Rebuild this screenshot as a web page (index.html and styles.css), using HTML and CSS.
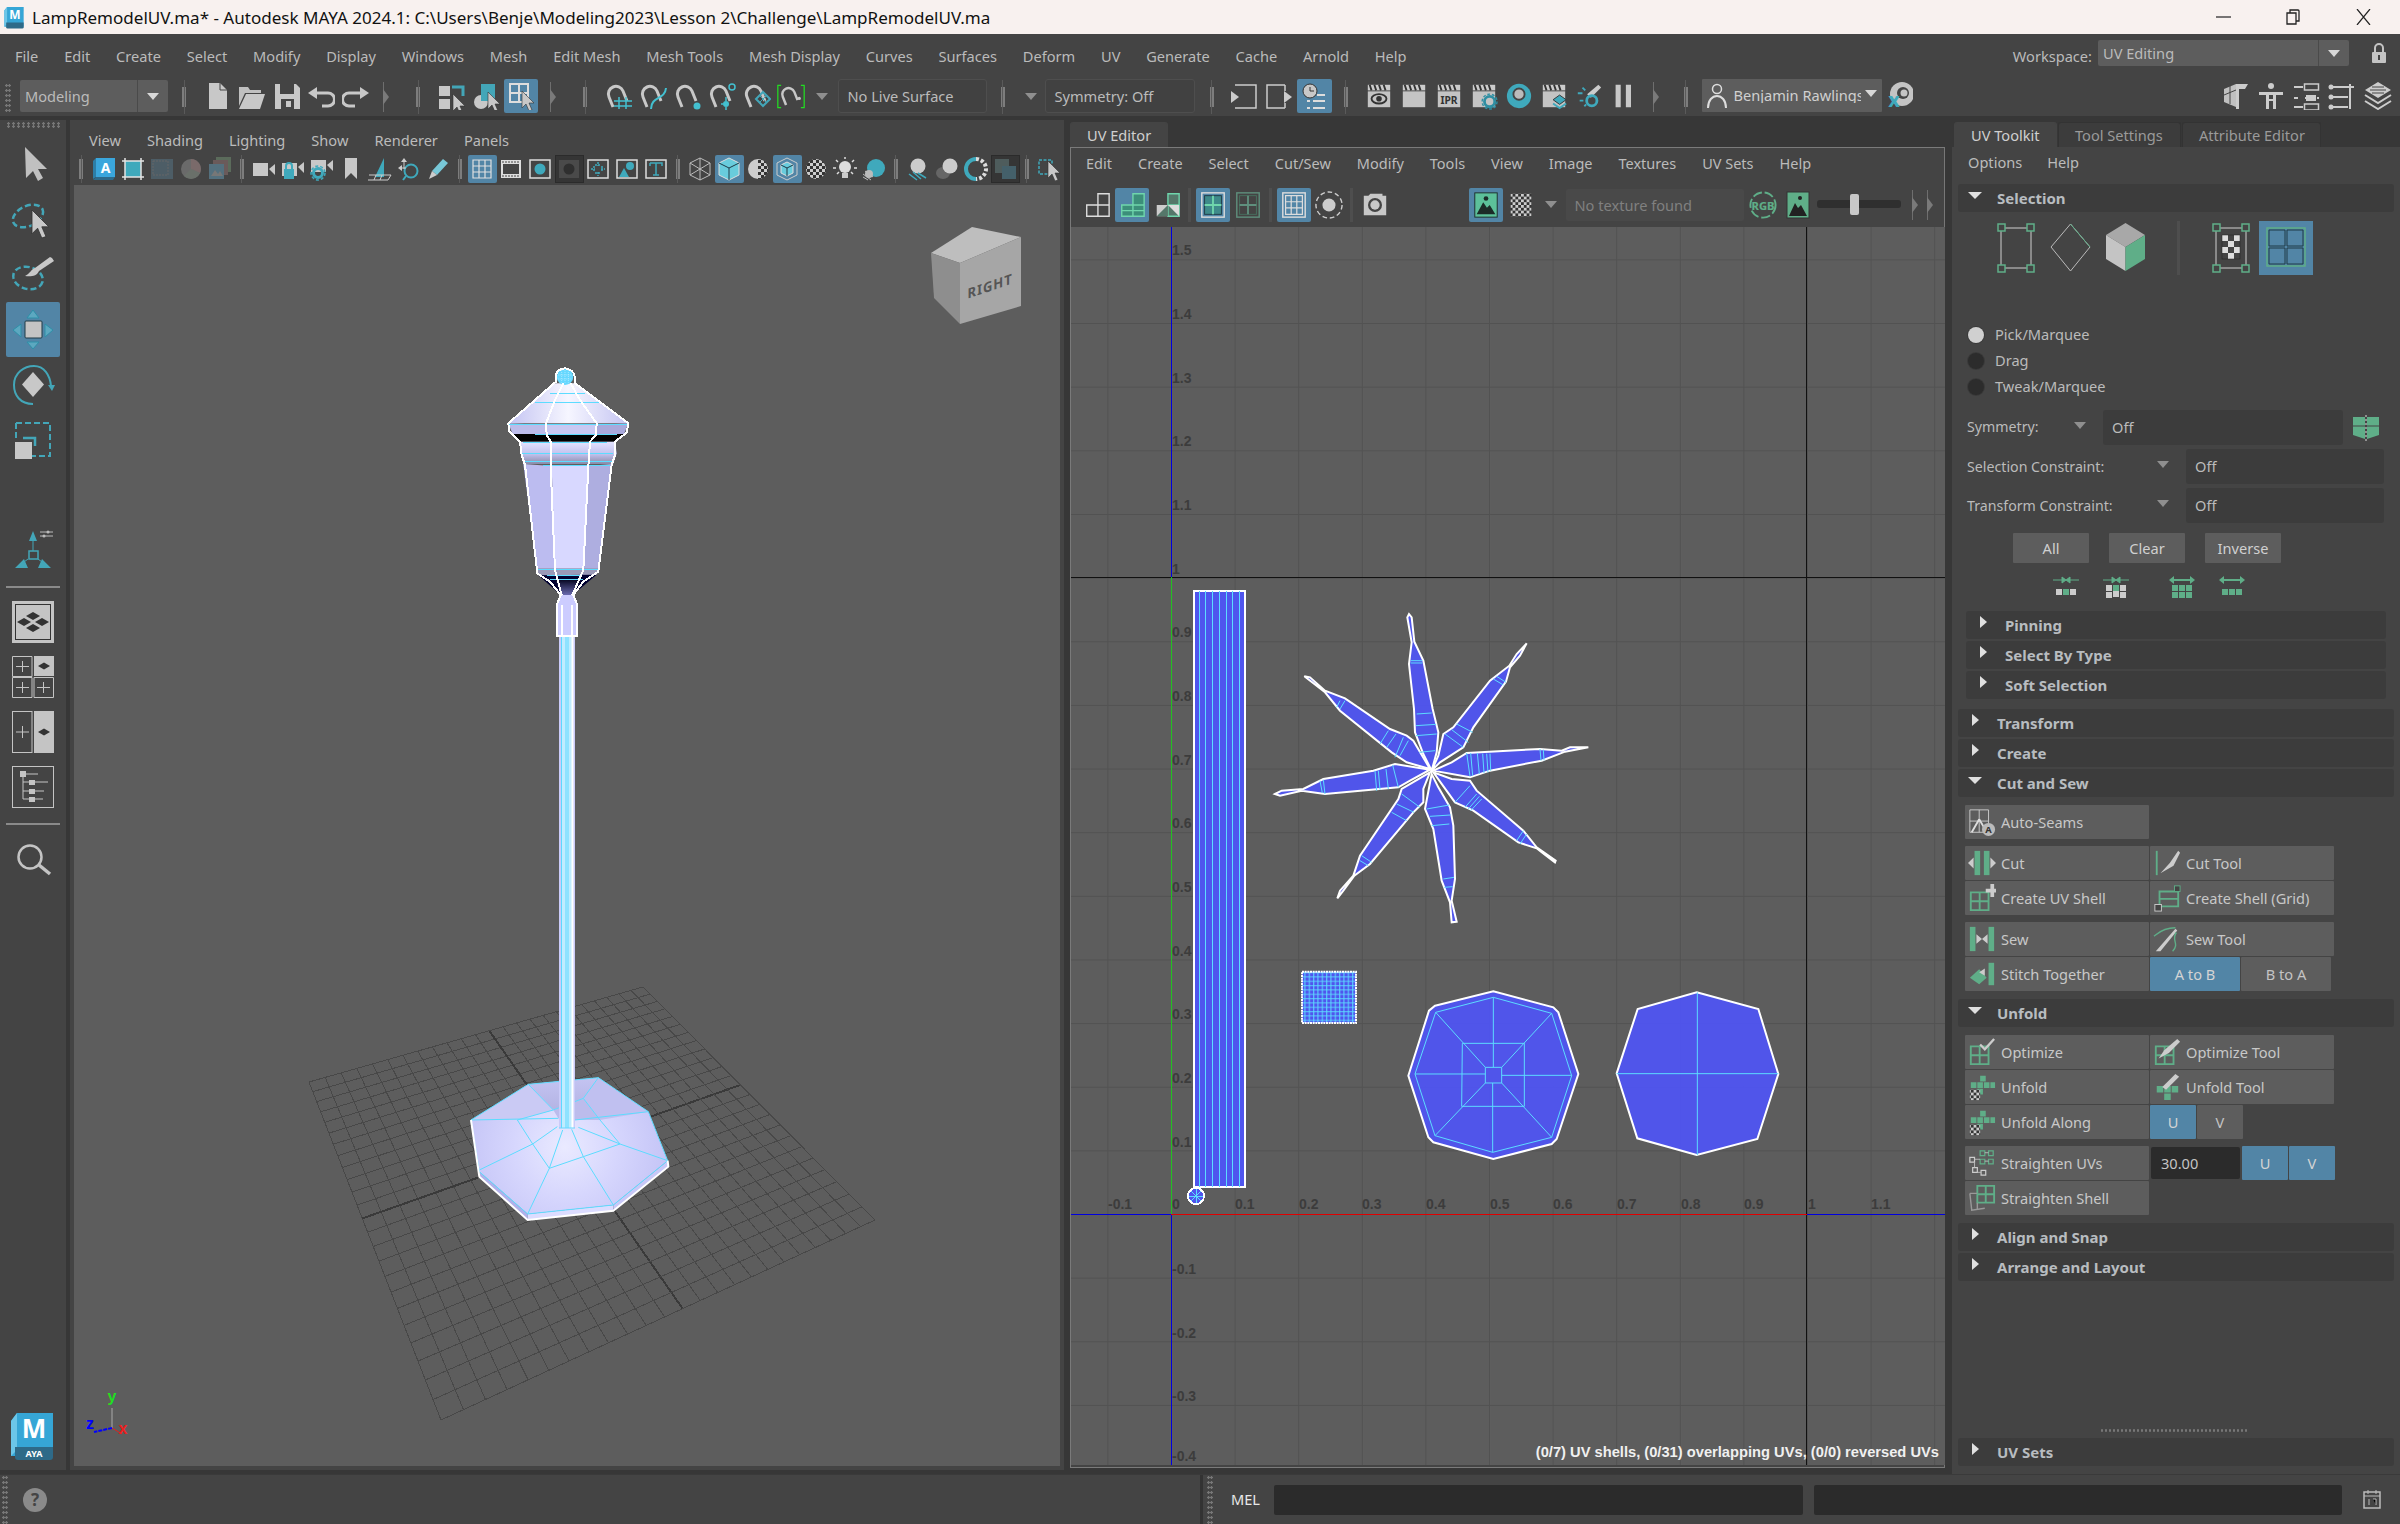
FILE: index.html
```html
<!DOCTYPE html>
<html lang="en">
<head>
<meta charset="utf-8">
<title>LampRemodelUV.ma* - Autodesk MAYA 2024.1</title>
<link rel="stylesheet" href="styles.css">
</head>
<body>
<svg class="defs" aria-hidden="true">
  <defs>
    <pattern id="chk" width="6" height="6" patternUnits="userSpaceOnUse"><rect width="6" height="6" fill="#333"/><rect width="3" height="3" fill="#ccc"/><rect x="3" y="3" width="3" height="3" fill="#ccc"/></pattern>
    <pattern id="uvgrid" x="1171" y="1215" width="63.6" height="63.64" patternUnits="userSpaceOnUse"><path d="M0 0H63.6M0 0V63.64" stroke="#525252" stroke-width="2" fill="none"/></pattern>
    <pattern id="dense" width="13" height="13" patternUnits="userSpaceOnUse"><rect width="13" height="13" fill="#4f55ee"/><path d="M0 2H13M2 0V13" stroke="#5cdcff" stroke-width="3"/></pattern>
    <linearGradient id="lampRoof" x1="0" x2="1"><stop offset="0" stop-color="#c4c4f2"/><stop offset=".5" stop-color="#f6f6ff"/><stop offset="1" stop-color="#c4c4f2"/></linearGradient>
    <linearGradient id="lampCollar" x1="0" x2="0" y1="0" y2="1"><stop offset="0" stop-color="#e4e4ff"/><stop offset=".55" stop-color="#c2c2ee"/><stop offset="1" stop-color="#8a8aa8"/></linearGradient>
    <linearGradient id="lampCone" x1="0" x2="0" y1="0" y2="1"><stop offset="0" stop-color="#000018"/><stop offset="1" stop-color="#6a6ab0"/></linearGradient>
    <radialGradient id="baseFill" gradientUnits="userSpaceOnUse" cx="375" cy="320" r="310"><stop offset="0" stop-color="#eaeaff"/><stop offset=".5" stop-color="#d6d6fd"/><stop offset="1" stop-color="#c4c4f6"/></radialGradient>
    <linearGradient id="baseBack" x1="0" x2="0" y1="0" y2="1"><stop offset="0" stop-color="#c4c4f2"/><stop offset="1" stop-color="#b4b4e4"/></linearGradient>
    <path id="cur" d="M0 0V17L4 13 7 20 10 19 7 12H12Z" fill="#c8c8c8" stroke="#333" stroke-width=".6"/>
    <path id="mag" d="M8 25 4 15A7.500 7.500 0 0 1 18 9L22 19" fill="none" stroke="#c8c8c8" stroke-width="3"/>
    <g id="clap"><rect x="3" y="3" width="24" height="6" fill="#ccc"/><path d="M5 3l2 6M10 3l2 6M15 3l2 6M20 3l2 6" stroke="#333" stroke-width="2"/><rect x="3" y="10" width="24" height="17" fill="#c4c4c4"/></g>
  </defs>
  <symbol id="new" viewBox="0 0 28 28"><path d="M5 1h11l7 7v19H5z" fill="#c8c8c8"/><path d="M16 1v7h7" fill="none" stroke="#444"/></symbol>
  <symbol id="open" viewBox="0 0 28 28"><path d="M1 5h9l2 3h11v3H7L1 24z" fill="#c0c0c0"/><path d="M8 12h19l-5 15H1z" fill="#c8c8c8"/></symbol>
  <symbol id="save" viewBox="0 0 28 28"><path d="M2 2h21l4 4v21H2z" fill="#c8c8c8"/><rect x="7" y="2" width="14" height="10" fill="#444"/><rect x="8" y="17" width="13" height="10" fill="#444"/><rect x="13" y="19" width="5" height="6" fill="#c8c8c8"/></symbol>
  <symbol id="undo" viewBox="0 0 28 28"><path d="M7 11h14a5 5 0 0 1 0 13h-6" fill="none" stroke="#c8c8c8" stroke-width="3"/><path d="M10 5 1 11l9 6z" fill="#c8c8c8"/></symbol>
  <symbol id="redo" viewBox="0 0 28 28"><path d="M21 11H7a5 5 0 0 0 0 13h6" fill="none" stroke="#c8c8c8" stroke-width="3"/><path d="M18 5l9 6-9 6z" fill="#c8c8c8"/></symbol>
  <symbol id="sel1" viewBox="0 0 28 28"><rect x="1" y="4" width="11" height="10" fill="#c8c8c8"/><rect x="1" y="17" width="11" height="10" fill="#c8c8c8"/><path d="M14 5h11v9" fill="none" stroke="#43a6b8" stroke-width="3"/><use href="#cur" x="15" y="12"/></symbol>
  <symbol id="sel2" viewBox="0 0 28 28"><circle cx="8" cy="20" r="7" fill="#c8c8c8"/><rect x="8" y="2" width="14" height="17" fill="#43a6b8"/><use href="#cur" x="15" y="10"/></symbol>
  <symbol id="sel3" viewBox="0 0 28 28"><path d="M3 2h18v18H3zM12 2v18M3 11h18" fill="none" stroke="#ddd" stroke-width="2"/><use href="#cur" x="15" y="9"/></symbol>
  <symbol id="m1" viewBox="0 0 28 28"><use href="#mag"/><path d="M14 15v12M21 15v12M9 19h18M9 24h18" stroke="#43c0d0" stroke-width="1.500"/></symbol>
  <symbol id="m2" viewBox="0 0 28 28"><use href="#mag"/><path d="M27 6C26 18 12 14 12 27" fill="none" stroke="#43c0d0" stroke-width="2"/></symbol>
  <symbol id="m3" viewBox="0 0 28 28"><use href="#mag"/><circle cx="23" cy="24" r="3.500" fill="#43c0d0"/></symbol>
  <symbol id="m4" viewBox="0 0 28 28"><use href="#mag"/><circle cx="24" cy="5" r="3" fill="none" stroke="#43c0d0" stroke-width="1.500"/><circle cx="18" cy="22" r="3" fill="#43c0d0"/><path d="M18 15v4M18 25v3M13 22h2" stroke="#43c0d0" stroke-width="1.500"/></symbol>
  <symbol id="m5" viewBox="0 0 28 28"><use href="#mag"/><path d="M13 17l7-7 7 7-7 7z" fill="none" stroke="#43a6b8" stroke-width="2"/><path d="M16.500 13.500l7 7M23.500 13.500l-7 7" stroke="#43a6b8"/></symbol>
  <symbol id="m6" viewBox="0 0 34 28"><path d="M5 1H1v27h4" fill="none" stroke="#22dd22" stroke-width="1.500"/><path d="M29 1h4v27h-4" fill="none" stroke="#22dd22" stroke-width="1.500"/><g transform="translate(3 0)"><use href="#mag"/><circle cx="24" cy="17" r="2" fill="#c8c8c8"/></g></symbol>
  <symbol id="input" viewBox="0 0 28 28"><path d="M3 4h21v23H3" fill="none" stroke="#ccc" stroke-width="1.500" transform="translate(2 -1)"/><path d="M1 9l8 6-8 6z" fill="#ccc"/></symbol>
  <symbol id="output" viewBox="0 0 28 28"><path d="M20 3H2v23h18" fill="none" stroke="#ccc" stroke-width="1.500"/><path d="M20 3v6M20 21v5" stroke="#ccc" stroke-width="1.500"/><path d="M19 9l8 6-8 6z" fill="#ccc"/></symbol>
  <symbol id="hist" viewBox="0 0 28 28"><circle cx="10" cy="9" r="7" fill="#c8c8c8" stroke="#333"/><path d="M10 5v4h4" stroke="#333" fill="none"/><path d="M7 19h3M13 19h12M7 26h3M13 26h12M17 13h8" stroke="#ddd" stroke-width="2"/></symbol>
  <symbol id="r1" viewBox="0 0 30 30"><use href="#clap"/><ellipse cx="15" cy="18" rx="8" ry="5" fill="none" stroke="#333" stroke-width="2"/><circle cx="15" cy="18" r="3" fill="#333"/></symbol>
  <symbol id="r2" viewBox="0 0 30 30"><use href="#clap"/></symbol>
  <symbol id="r4" viewBox="0 0 30 30"><use href="#clap"/><circle cx="21" cy="21" r="5.500" fill="none" stroke="#2f8fa3" stroke-width="3"/><circle cx="21" cy="21" r="8" fill="none" stroke="#2f8fa3" stroke-width="1.500" stroke-dasharray="3 2"/></symbol>
  <symbol id="r5" viewBox="0 0 30 30"><circle cx="15" cy="15" r="13" fill="#3fa9bc"/><circle cx="15" cy="13" r="6" fill="#bbb" stroke="#444" stroke-width="2"/></symbol>
  <symbol id="r6" viewBox="0 0 30 30"><use href="#clap"/><path d="M21 14l7 5-7 5-7-5z" fill="#3fa9bc" stroke="#333"/><path d="M14 23l7 5 7-5" fill="none" stroke="#3fa9bc" stroke-width="2"/></symbol>
  <symbol id="r7" viewBox="0 0 30 30"><path d="M13 13 25 3l3 3-11 11z" fill="#ccc"/><circle cx="18" cy="20" r="5.500" fill="none" stroke="#3fa9bc" stroke-width="3"/><path d="M3 12h5M5 20h4M8 6l3 3M10 26l2-2" stroke="#3fa9bc" stroke-width="2"/></symbol>
  <symbol id="pause" viewBox="0 0 30 30"><path d="M6 3h5.500v24H6zM17 3h5.500v24H17z" fill="#c8c8c8"/></symbol>
  <symbol id="user" viewBox="0 0 22 30"><circle cx="11" cy="8" r="4.500" fill="none" stroke="#ddd" stroke-width="1.500"/><path d="M2 27c0-16 18-16 18 0" fill="none" stroke="#ddd" stroke-width="2"/></symbol>
  <symbol id="lock" viewBox="0 0 16 22"><path d="M4 10V6a4 4 0 0 1 8 0v4" fill="none" stroke="#c4c4c4" stroke-width="2"/><rect x="1" y="10" width="14" height="11" rx="1" fill="#c4c4c4"/><rect x="7" y="13" width="2" height="5" fill="#444"/></symbol>
  <symbol id="w1" viewBox="0 0 28 28"><path d="M2 7l12-5v23L2 20z" fill="#c0c0c0"/><path d="M14 2h12l-3 5h-6v20h-3z" fill="#ccc"/><path d="M8 4v18M2 13l12-5" stroke="#444"/></symbol>
  <symbol id="w2" viewBox="0 0 28 28"><circle cx="14" cy="4" r="3" fill="#ccc"/><path d="M2 10h24v3h-7v14h-3v-8h-4v8H9V13H2z" fill="#ccc"/><rect x="12" y="13" width="4" height="4" fill="#444"/></symbol>
  <symbol id="w3" viewBox="0 0 28 28"><path d="M1 6h9M1 17h4M1 26h9M12 17h2M24 17h2" stroke="#ccc" stroke-width="2" transform="translate(0 -1)"/><rect x="11.500" y="2" width="14" height="6" fill="none" stroke="#ccc" stroke-width="1.500"/><rect x="13" y="13" width="10" height="6" fill="#ccc"/><rect x="11.500" y="22" width="14" height="6" fill="none" stroke="#ccc" stroke-width="1.500"/></symbol>
  <symbol id="w4" viewBox="0 0 28 28"><circle cx="3" cy="5" r="2.500" fill="#ccc"/><circle cx="3" cy="15" r="2.500" fill="#ccc"/><circle cx="3" cy="25" r="2.500" fill="#ccc"/><path d="M5 5h21M5 15h15M5 25h15M22 2v25" stroke="#ccc" stroke-width="2"/></symbol>
  <symbol id="w5" viewBox="0 0 28 28"><path d="M14 0 27 8 14 16 1 8z" fill="#ccc"/><path d="M1 13l13 8 13-8M1 19l13 8 13-8" fill="none" stroke="#ccc" stroke-width="2"/><path d="M6 8h16M8 5h12M8 11h12" stroke="#444"/></symbol>

  <symbol id="pb" viewBox="0 0 24 24"><rect x="4" y="4" width="16" height="16" fill="#3fa9bc"/><path d="M1 4h22M1 20h22M4 1v22M20 1v22" stroke="#e4e4e4" stroke-width="1.500"/></symbol>
  <symbol id="pc" viewBox="0 0 24 24"><rect x="1" y="2" width="22" height="20" fill="#4d5d66"/><rect x="3" y="4" width="15" height="14" fill="none" stroke="#666" stroke-dasharray="2 1"/></symbol>
  <symbol id="pd" viewBox="0 0 24 24"><circle cx="12" cy="12" r="10" fill="#6a6a6a"/><path d="M12 12 12 2A10 10 0 0 1 21 16z" fill="#7a6a6a"/><path d="M12 12 21 16A10 10 0 0 1 5 19z" fill="#6a706a"/></symbol>
  <symbol id="pe" viewBox="0 0 24 24"><rect x="8" y="0" width="15" height="15" fill="#5b6b5b"/><rect x="5" y="3" width="15" height="15" fill="#6a5a5a"/><rect x="1" y="7" width="15" height="15" fill="#54707e"/><path d="M3 19l4-6 3 4 2-3 3 5z" fill="#777"/></symbol>
  <symbol id="pf" viewBox="0 0 24 24"><rect x="1" y="6" width="15" height="13" fill="#c8c8c8"/><path d="M17 12l6-5v11z" fill="#c8c8c8"/></symbol>
  <symbol id="pg" viewBox="0 0 24 24"><rect x="1" y="6" width="15" height="13" fill="#c8c8c8"/><path d="M17 10l6-5v11z" fill="#c8c8c8"/><rect x="3" y="12" width="10" height="10" fill="#3fa9bc"/><path d="M5 12V9a3 3 0 0 1 6 0v3" fill="none" stroke="#3fa9bc" stroke-width="2"/></symbol>
  <symbol id="ph" viewBox="0 0 24 24"><rect x="1" y="3" width="15" height="12" fill="#c8c8c8"/><path d="M17 8l6-5v11z" fill="#c8c8c8"/><circle cx="8" cy="16" r="4.500" fill="none" stroke="#3fa9bc" stroke-width="3"/><circle cx="8" cy="16" r="7" fill="none" stroke="#3fa9bc" stroke-width="1.500" stroke-dasharray="3 2"/></symbol>
  <symbol id="pi" viewBox="0 0 24 24"><path d="M6 1h12v21l-6-6-6 6z" fill="#c8c8c8"/></symbol>
  <symbol id="pj" viewBox="0 0 24 24"><path d="M16 1v19H7z" fill="#3fa9bc"/><path d="M1 18h22l-3 5H0M8 18l-2 5M14 18l-2 5" fill="none" stroke="#ccc"/></symbol>
  <symbol id="pk" viewBox="0 0 24 24"><circle cx="14" cy="14" r="6.500" fill="none" stroke="#3fa9bc" stroke-width="2"/><path d="M9 19l-3 4" stroke="#3fa9bc" stroke-width="2"/><path d="M7 1l-3 4h6zM1 11l4-3v6z" fill="#ccc"/><path d="M7 5v7M3 11h6" stroke="#ccc"/></symbol>
  <symbol id="pl" viewBox="0 0 24 24"><path d="M6 14 17 2l5 4-11 12z" fill="#78c8d8"/><path d="M6 14l5 4-8 4z" fill="#ccc"/></symbol>
  <symbol id="pm" viewBox="0 0 24 24"><path d="M3 3h18v18H3zM9 3v18M15 3v18M3 9h18M3 15h18" fill="none" stroke="#e0e0e0" stroke-width="1.200"/></symbol>
  <symbol id="pn" viewBox="0 0 24 24"><rect x="2" y="3" width="20" height="18" fill="#ddd"/><rect x="4" y="7" width="16" height="10" fill="#444"/><path d="M3 5h18M3 19h18" stroke="#444" stroke-dasharray="2 1"/></symbol>
  <symbol id="po" viewBox="0 0 24 24"><rect x="2" y="3" width="20" height="18" fill="none" stroke="#ddd" stroke-width="1.500"/><circle cx="12" cy="12" r="5.500" fill="#3fa9bc"/></symbol>
  <symbol id="pp" viewBox="0 0 24 24"><rect x="2" y="3" width="20" height="18" fill="#4a4a4a"/><circle cx="12" cy="12" r="5.500" fill="#2f2f2f"/></symbol>
  <symbol id="pq" viewBox="0 0 24 24"><rect x="2" y="3" width="20" height="18" fill="none" stroke="#ddd" stroke-width="1.500"/><path d="M12 5v4M12 15v4M5 12h4M15 12h4M9 8h6M9 16h6M8 9v6M16 9v6" stroke="#3fa9bc" stroke-width="1.500" stroke-dasharray="2 1"/></symbol>
  <symbol id="pr" viewBox="0 0 24 24"><rect x="2" y="3" width="20" height="18" fill="none" stroke="#ddd" stroke-width="1.500"/><path d="M4 20l5-9 5 9z" fill="#3fa9bc"/><circle cx="15" cy="9" r="4" fill="#3fa9bc"/></symbol>
  <symbol id="ps" viewBox="0 0 24 24"><rect x="2" y="3" width="20" height="18" fill="none" stroke="#ddd" stroke-width="1.500"/><path d="M6 6h12v3M6 6v3M12 6v12M9 18h6" fill="none" stroke="#3fa9bc" stroke-width="1.500"/></symbol>
  <symbol id="pt" viewBox="0 0 24 24"><path d="M12 1 22 6v12l-10 5L2 18V6zM2 6l20 12M22 6 2 18M12 1v22" fill="none" stroke="#bbb"/></symbol>
  <symbol id="pu" viewBox="0 0 24 24"><path d="M12 1 22 6v12l-10 5L2 18V6z" fill="#68ccdc" stroke="#ddd"/><path d="M2 6l10 5 10-5M12 11v12" fill="none" stroke="#1e3a46"/></symbol>
  <symbol id="pv" viewBox="0 0 24 24"><path d="M12 2a10 10 0 0 0 0 20z" fill="#ccc"/><path d="M12 2a10 10 0 0 1 0 20z" fill="url(#chk)"/></symbol>
  <symbol id="pw" viewBox="0 0 24 24"><path d="M12 1 22 6v12l-10 5L2 18V6z" fill="none" stroke="#ccc"/><path d="M12 5l6 3v8l-6 3-6-3V8z" fill="#68ccdc" stroke="#ddd"/><path d="M6 8l6 3 6-3M12 11v8" fill="none" stroke="#1e3a46"/></symbol>
  <symbol id="px" viewBox="0 0 24 24"><circle cx="12" cy="12" r="10" fill="url(#chk)"/></symbol>
  <symbol id="py" viewBox="0 0 24 24"><circle cx="12" cy="10" r="6" fill="#ddd"/><rect x="9" y="16" width="6" height="5" fill="#ccc"/><path d="M12 0v2M3 3l2 2M21 3l-2 2M0 11h3M21 11h3M4 17l2-2M20 17l-2-2" stroke="#ddd" stroke-width="1.500"/></symbol>
  <symbol id="pz" viewBox="0 0 24 24"><circle cx="14" cy="11" r="9" fill="#3fa9bc"/><path d="M1 17l8 6M3 14l8 6M1 20l5 3" stroke="#bbb"/><circle cx="7" cy="17" r="4" fill="#bbb"/></symbol>
  <symbol id="qa" viewBox="0 0 24 24"><circle cx="12" cy="9" r="7.500" fill="#ccc"/><path d="M3 17l8 6M7 15l8 7M12 16l8 5" stroke="#3fa9bc" stroke-width="1.500"/></symbol>
  <symbol id="qb" viewBox="0 0 24 24"><ellipse cx="8" cy="16" rx="7" ry="6" fill="#666"/><circle cx="15" cy="9" r="7.500" fill="#ccc"/></symbol>
  <symbol id="qc" viewBox="0 0 24 24"><path d="M12 2a10 10 0 0 0 0 20" fill="none" stroke="#3fa9bc" stroke-width="4"/><path d="M12 2a10 10 0 0 1 0 20" fill="none" stroke="#ddd" stroke-width="4" stroke-dasharray="3 2"/></symbol>
  <symbol id="qd" viewBox="0 0 24 24"><rect x="2" y="2" width="14" height="14" fill="#4e5c5c"/><rect x="9" y="9" width="14" height="13" fill="#44606a"/></symbol>
  <symbol id="qe" viewBox="0 0 24 24"><rect x="2" y="3" width="13" height="14" fill="none" stroke="#3fa9bc" stroke-width="1.500" stroke-dasharray="3 1.500"/><use href="#cur" x="11" y="4"/></symbol>

  <symbol id="u1" viewBox="0 0 30 30"><path d="M16 3h12v12H16zM4 15h12v12H4zM16 15h12v12H16z" fill="none" stroke="#ddd" stroke-width="1.500"/></symbol>
  <symbol id="u2" viewBox="0 0 30 30"><path d="M16 3h12v24H4V15h12zM4 21h24M16 15v12M16 15h12" fill="#3c8f7a" stroke="#6fd6ac" stroke-width="1.500"/></symbol>
  <symbol id="u3" viewBox="0 0 30 30"><path d="M16 3h12v12H16zM16 15h12v12H16z" fill="#55776a" stroke="#6fd6ac" stroke-width="1.500"/><path d="M4 15h12v12H4z" fill="#ccc"/><path d="M16 15v12H4z" fill="#55776a"/><path d="M16 15h12v12z" fill="#ddd"/></symbol>
  <symbol id="u4" viewBox="0 0 30 30"><rect x="3" y="2" width="24" height="26" fill="none" stroke="#ddd" stroke-width="1.500"/><rect x="6" y="5" width="18" height="20" fill="#3e8a8a" stroke="#1e3a46"/><path d="M15 5v20M6 15h18" stroke="#6fd6ac" stroke-width="2"/></symbol>
  <symbol id="u5" viewBox="0 0 30 30"><rect x="3" y="2" width="24" height="26" fill="none" stroke="#5f8f7d" stroke-width="1.500"/><rect x="6" y="5" width="18" height="20" fill="none" stroke="#48705f"/><path d="M15 5v20M6 15h18" stroke="#5f8f7d" stroke-width="2"/></symbol>
  <symbol id="u6" viewBox="0 0 30 30"><rect x="3" y="2" width="24" height="26" fill="none" stroke="#ddd" stroke-width="1.500"/><path d="M6 5h18v20H6zM12 5v20M18 5v20M6 11.500h18M6 18h18" fill="none" stroke="#ddd" stroke-width="1.300"/></symbol>
  <symbol id="u7" viewBox="0 0 30 30"><circle cx="15" cy="15" r="14" fill="none" stroke="#ccc" stroke-width="1.500" stroke-dasharray="5 3"/><circle cx="15" cy="15" r="7" fill="#ccc"/></symbol>
  <symbol id="u8" viewBox="0 0 30 30"><path d="M3 5h5l2-2h13v2h4v21H3z" fill="#c8c8c8"/><circle cx="15" cy="15" r="7.500" fill="#444"/><circle cx="15" cy="15" r="5" fill="#c8c8c8"/></symbol>
  <symbol id="u9" viewBox="0 0 30 30"><rect x="3" y="2" width="24" height="26" fill="#5cc09a" stroke="#1c2b28"/><path d="M5 25l7-13 4 6 3-3 6 10z" fill="#1c2b28"/><circle cx="15" cy="8" r="2.500" fill="#1c2b28"/></symbol>
  <symbol id="u10" viewBox="0 0 30 30"><rect x="4" y="3" width="22" height="24" fill="url(#chk)"/></symbol>
  <symbol id="imgg" viewBox="0 0 24 30"><rect x="1" y="2" width="22" height="26" fill="#5fae88" stroke="#333"/><path d="M3 26l6-13 3 5 3-3 6 11z" fill="#222"/><circle cx="14" cy="8" r="2" fill="#222"/></symbol>

  <symbol id="t1" viewBox="0 0 38 54"><path d="M4 7v40M34 7v40M4 7h30M4 47h30" fill="none" stroke="#cfcfcf"/><path d="M1 3h7v7H1zM30 3h7v7h-7zM1 44h7v7H1zM30 44h7v7h-7z" fill="#444" stroke="#5fae88" stroke-width="1.500"/></symbol>
  <symbol id="t2" viewBox="0 0 41 54"><path d="M20.500 3 40 26 20.500 50 1 26z" fill="none" stroke="#bbb" stroke-width="1"/><path d="M20.500 3 40 26" stroke="#5fae88"/></symbol>
  <symbol id="t3" viewBox="0 0 41 54"><path d="M20.500 2 40 14 20.500 26 1 14z" fill="#a8a8a8"/><path d="M1 14l19.500 12V50L1 38z" fill="#c4c4c4"/><path d="M40 14 20.500 26V50L40 38z" fill="#5fae88"/></symbol>
  <symbol id="t4" viewBox="0 0 38 54"><path d="M4 7v40M34 7v40M4 7h30M4 47h30" fill="none" stroke="#cfcfcf"/><path d="M1 3h7v7H1zM30 3h7v7h-7zM1 44h7v7H1zM30 44h7v7h-7z" fill="#444" stroke="#5fae88" stroke-width="1.500"/><g fill="#ddd"><rect x="10" y="14" width="6" height="6"/><rect x="22" y="14" width="6" height="6"/><rect x="16" y="20" width="6" height="6"/><rect x="10" y="26" width="6" height="6"/><rect x="22" y="26" width="6" height="6"/><rect x="16" y="32" width="6" height="6"/></g><rect x="10" y="14" width="18" height="24" fill="none" stroke="#222" stroke-width=".5"/></symbol>
  <symbol id="t5" viewBox="0 0 54 54"><rect x="8" y="7" width="38" height="38" fill="none" stroke="#5fae88" stroke-width="1.500"/><path d="M10 9h16v16H10zM28 9h16v16H28zM10 27h16v16H10zM28 27h16v16H28z" fill="#5285a6" stroke="#1e3a46"/></symbol>
  <symbol id="sym" viewBox="0 0 28 26"><path d="M1 2h12v22L1 20zM15 2h12v18l-12 4z" fill="#5fae88"/><path d="M1 11h12M15 11h12" stroke="#444"/><path d="M14 0v26" stroke="#ddd" stroke-dasharray="2 2"/></symbol>
  <symbol id="a1" viewBox="0 0 26 22"><path d="M0 4h9M9 1l4 3-4 3zM26 4h-9M17 1l-4 3 4 3z" fill="#5fae88" stroke="#5fae88"/><path d="M3 13h6v6H3zM17 13h6v6h-6z" fill="#ccc"/><path d="M10 13h6v6h-6z" fill="#5fae88"/></symbol>
  <symbol id="a2" viewBox="0 0 26 22"><path d="M0 4h9M9 1l4 3-4 3zM26 4h-9M17 1l-4 3 4 3z" fill="#5fae88" stroke="#5fae88"/><path d="M3 9h6v6H3zM10 15h6v6h-6zM17 9h6v6h-6zM3 16h6v6H3zM17 16h6v6h-6z" fill="#ccc"/><path d="M10 9h6v6h-6z" fill="#5fae88"/></symbol>
  <symbol id="a3" viewBox="0 0 26 22"><path d="M4 4h18" stroke="#5fae88" stroke-width="2"/><path d="M5 0 0 4l5 4zM21 0l5 4-5 4z" fill="#5fae88"/><path d="M3 9h6v6H3zM10 9h6v6h-6zM17 9h6v6h-6zM3 16h6v6H3zM10 16h6v6h-6zM17 16h6v6h-6z" fill="#5fae88"/></symbol>
  <symbol id="a4" viewBox="0 0 26 22"><path d="M4 4h18" stroke="#5fae88" stroke-width="2"/><path d="M5 0 0 4l5 4zM21 0l5 4-5 4z" fill="#5fae88"/><path d="M3 13h6v6H3zM10 13h6v6h-6zM17 13h6v6h-6z" fill="#5fae88"/></symbol>

  <symbol id="b2" viewBox="0 0 30 30"><rect x="7" y="2" width="6" height="26" fill="#5fae88"/><rect x="17" y="2" width="6" height="26" fill="#5fae88"/><path d="M6 9 0 15l6 6zM24 9l6 6-6 6z" fill="#ccc"/></symbol>
  <symbol id="b3" viewBox="0 0 30 30"><path d="M4 2v26" stroke="#5fae88" stroke-width="2"/><path d="M8 26 18 15 27 2 29 4 22 18z" fill="#ccc"/></symbol>
  <symbol id="b4" viewBox="0 0 30 30"><path d="M3 9h19v19H3zM12.500 9v19M3 18.500h19" fill="none" stroke="#5fae88" stroke-width="2"/><path d="M19 5h5V0h4v5h2v4h-2v5h-4V9h-5z" fill="#ccc"/></symbol>
  <symbol id="b5" viewBox="0 0 30 30"><path d="M7 8h20v16H7zM7 16h20" fill="none" stroke="#5fae88" stroke-width="2"/><rect x="23" y="2" width="6" height="6" fill="#444" stroke="#5fae88"/><rect x="2" y="22" width="7" height="7" fill="#444" stroke="#ccc"/></symbol>
  <symbol id="b6" viewBox="0 0 30 30"><rect x="2" y="2" width="6" height="26" fill="#5fae88"/><rect x="22" y="2" width="6" height="26" fill="#5fae88"/><path d="M9 10l6 5-6 5zM21 10l-6 5 6 5z" fill="#ccc"/></symbol>
  <symbol id="b7" viewBox="0 0 30 30"><path d="M3 28 24 4l2 2L8 28z" fill="#ccc"/><path d="M24 3C10 3 4 10 1 12M25 8c-6 8 4 12-4 20" fill="none" stroke="#5fae88" stroke-width="1.500"/></symbol>
  <symbol id="b8" viewBox="0 0 30 30"><path d="M2 19 12 10l8 9-8 7z" fill="#5fae88"/><rect x="22" y="3" width="6" height="24" fill="#5fae88"/><path d="M20 12l-6 4 6 4z" fill="#ccc" transform="translate(-2 -3)"/></symbol>
  <symbol id="b9" viewBox="0 0 30 30"><path d="M3 9h19v19H3zM12.500 9v19M3 18.500h19" fill="none" stroke="#5fae88" stroke-width="2"/><path d="M13 7l5 5 10-11" fill="none" stroke="#ccc" stroke-width="2.500"/></symbol>
  <symbol id="b10" viewBox="0 0 30 30"><path d="M3 9h19v19H3zM12.500 9v19M3 18.500h19" fill="none" stroke="#5fae88" stroke-width="2"/><path d="M6 22l6-9L26 1l3 3-12 12z" fill="#ccc"/></symbol>
  <symbol id="b11" viewBox="0 0 30 30"><path d="M14 3h6v6h-6zM4 10h6v6H4zM11 10h6v6h-6zM18 10h6v6h-6zM25 10h5v6h-5zM11 17h6v6h-6z" fill="#5fae88" transform="translate(-1 0)"/><rect x="2" y="18" width="11" height="11" fill="url(#chk)"/></symbol>
  <symbol id="b12" viewBox="0 0 30 30"><path d="M4 14h7v7H4zM12 14h7v7h-7zM20 14h7v7h-7zM12 22h7v7h-7z" fill="#5fae88"/><path d="M10 15 24 1l4 3-14 14z" fill="#ccc"/></symbol>
  <symbol id="b13" viewBox="0 0 30 30"><path d="M13 2h5v5h-5zM22 2h5v5h-5zM13 11h5v5h-5zM22 11h5v5h-5z" fill="none" stroke="#5fae88" stroke-width="1.300"/><path d="M2 9h5v5H2zM5 20h5v5H5zM14 23h5v5h-5z" fill="none" stroke="#ccc" stroke-width="1.300"/><path d="M18 4h4M18 13h4M7 11h6M7 14v6M10 25h4" stroke="#bbb"/></symbol>
  <symbol id="b14" viewBox="0 0 30 30"><path d="M10 2h18v18H10zM19 2v18M10 11h18" fill="none" stroke="#5fae88" stroke-width="2"/><path d="M2 10h8M2 10l2 18 14-2M10 20v7" fill="none" stroke="#999" stroke-width="1.500"/></symbol>
</svg>

<header class="titlebar">
  <svg class="title-logo" viewBox="0 0 46 50"><path d="M2 10 8 2h36v43H2z" fill="#36a6d6"/><path d="M2 10 8 2v37l-6 6z" fill="#6cc6e8"/><path d="M6 36h38v10a3 3 0 0 1-3 3H9a3 3 0 0 1-3-3z" fill="#2e6a88"/><text x="25" y="28" class="svgt mm">M</text></svg>
  <span class="title-text">LampRemodelUV.ma* - Autodesk MAYA 2024.1: C:\Users\Benje\Modeling2023\Lesson 2\Challenge\LampRemodelUV.ma</span>
  <div class="winctl">
    <svg class="wc wc-min" viewBox="0 0 15 16"><path d="M0 8h15" stroke="#222" stroke-width="1.200"/></svg>
    <svg class="wc wc-max" viewBox="0 0 15 16"><path d="M2 4h9v11H2zM5 4V1h8a1 1 0 0 1 1 1v10h-3" fill="none" stroke="#222" stroke-width="1.300"/></svg>
    <svg class="wc wc-close" viewBox="0 0 15 16"><path d="M1 0 14 16M14 0 1 16" stroke="#222" stroke-width="1.200"/></svg>
  </div>
</header>

<nav class="menubar">
  <div class="menu main-menu"><span>File</span><span>Edit</span><span>Create</span><span>Select</span><span>Modify</span><span>Display</span><span>Windows</span><span>Mesh</span><span>Edit Mesh</span><span>Mesh Tools</span><span>Mesh Display</span><span>Curves</span><span>Surfaces</span><span>Deform</span><span>UV</span><span>Generate</span><span>Cache</span><span>Arnold</span><span>Help</span></div>
  <div class="workspace"><span class="ws-label">Workspace:</span><div class="combo ws-combo"><span class="combo-text">UV Editing</span><span class="combo-arrow"><i class="tri-d"></i></span></div><svg class="lock"><use href="#lock"/></svg></div>
</nav>

<section class="toolbar">
  <i class="dots tb-dots"></i>
  <div class="combo mode-combo"><span class="combo-text">Modeling</span><span class="combo-arrow"><i class="tri-d"></i></span></div>
  <i class="grip grip-a"></i>
  <div class="slots g-file"><span class="s"><svg><use href="#new"/></svg></span><span class="s"><svg><use href="#open"/></svg></span><span class="s"><svg><use href="#save"/></svg></span><span class="s"><svg><use href="#undo"/></svg></span><span class="s"><svg><use href="#redo"/></svg></span></div>
  <i class="chev chev-a"></i><i class="grip grip-b"></i>
  <div class="slots g-sel"><span class="s"><svg><use href="#sel1"/></svg></span><span class="s"><svg><use href="#sel2"/></svg></span><span class="s on"><svg><use href="#sel3"/></svg></span></div>
  <i class="chev chev-b"></i><i class="grip grip-b"></i>
  <div class="slots g-snap"><span class="s"><svg><use href="#m1"/></svg></span><span class="s"><svg><use href="#m2"/></svg></span><span class="s"><svg><use href="#m3"/></svg></span><span class="s"><svg><use href="#m4"/></svg></span><span class="s"><svg><use href="#m5"/></svg></span><span class="s"><svg><use href="#m6"/></svg></span></div>
  <i class="tri-d dim ml-a"></i>
  <div class="outfield live">No Live Surface</div>
  <i class="grip grip-c"></i>
  <i class="tri-d dim ml-b"></i>
  <div class="outfield symm">Symmetry: Off</div>
  <i class="grip grip-d"></i>
  <div class="slots g-io"><span class="s s35"><svg><use href="#input"/></svg></span><span class="s s35"><svg><use href="#output"/></svg></span><span class="s s35 on"><svg><use href="#hist"/></svg></span></div>
  <i class="grip grip-e"></i>
  <div class="slots g-render"><span class="s s35"><svg><use href="#r1"/></svg></span><span class="s s35"><svg><use href="#r2"/></svg></span><span class="s s35"><svg viewBox="0 0 30 30"><use href="#clap"/><text x="15" y="24" class="svgt ipr">IPR</text></svg></span><span class="s s35"><svg><use href="#r4"/></svg></span><span class="s s35"><svg><use href="#r5"/></svg></span><span class="s s35"><svg><use href="#r6"/></svg></span><span class="s s35"><svg><use href="#r7"/></svg></span><span class="s s35"><svg><use href="#pause"/></svg></span></div>
  <i class="chev chev-c"></i><i class="grip grip-f"></i>
  <div class="userbox"><svg class="user-ic"><use href="#user"/></svg><span class="user-name">Benjamin Rawlings</span><i class="tri-d"></i></div>
  <svg class="xgen" viewBox="0 0 26 30"><circle cx="15" cy="14" r="12" fill="#c4c4c4"/><circle cx="16" cy="13" r="6" fill="#444"/><circle cx="17" cy="13" r="3.500" fill="#c4c4c4"/><text x="7" y="27" class="svgt xg">x</text></svg>
  <div class="slots g-work"><span class="s s-w"><svg><use href="#w1"/></svg></span><span class="s s-w"><svg><use href="#w2"/></svg></span><span class="s s-w"><svg><use href="#w3"/></svg></span><span class="s s-w"><svg><use href="#w4"/></svg></span><span class="s s-w"><svg><use href="#w5"/></svg></span></div>
</section>

<main class="workarea">
  <aside class="toolbox">
    <i class="dots-h"></i>
    <div class="tool first"><svg viewBox="0 0 54 55"><path d="M19 10 41 32 32 32 37 41 32 44 27 34 20 41Z" fill="#c0c0c0"/></svg></div>
    <div class="tool"><svg viewBox="0 0 54 55"><ellipse cx="22" cy="24" rx="16" ry="10" transform="rotate(-25 22 24)" fill="none" stroke="#43a6b8" stroke-width="2.500" stroke-dasharray="6 3"/><use href="#cur" transform="translate(26 18) scale(1.400)"/></svg></div>
    <div class="tool"><svg viewBox="0 0 54 55"><ellipse cx="22" cy="31" rx="15" ry="11" transform="rotate(15 22 31)" fill="none" stroke="#43a6b8" stroke-width="2.500" stroke-dasharray="6 3"/><path d="M46 11 48 14 33 24C31 29 25 30 19 29 24 27 25 22 29 21L44 10Z" fill="#c8c8c8"/></svg></div>
    <div class="tool on"><svg viewBox="0 0 54 55"><rect x="19" y="19" width="17" height="17" rx="1" fill="#c4c4c4" stroke="#1e3a46"/><path d="M21 16l6-8 6 8zM21 40l6 7 6-7zM15 22l-8 6 8 7zM39 22l8 6-8 7z" fill="#5ca8c0" stroke="#2e8fa8"/></svg></div>
    <div class="tool"><svg viewBox="0 0 54 55"><path d="M27 47C14 47 8 38 8 28 8 16 18 9 28 9 38 9 44 18 45 29" fill="none" stroke="#43a6b8" stroke-width="2"/><path d="M42 28h7l-3 6z" fill="#43a6b8"/><path d="M16 27.500 27 15l11 12.500L27 40z" fill="#c8c8c8"/></svg></div>
    <div class="tool"><svg viewBox="0 0 54 55"><path d="M10 11h34v33H26M10 11v18" fill="none" stroke="#43a6b8" stroke-width="2" stroke-dasharray="6 3"/><path d="M17 26h12v8" fill="none" stroke="#43a6b8" stroke-width="2.500"/><rect x="9" y="30" width="17" height="17" fill="#c8c8c8"/></svg></div>
    <div class="tool skip"><svg viewBox="0 0 54 55"><path d="M27 9l4 10h-8zM9 46l9-9 4 9zM45 46l-9-9-4 9z" fill="#43a6b8"/><path d="M27 19v10M22 37l-4 3M32 37l4 3" stroke="#43a6b8"/><rect x="23" y="29" width="9" height="8" fill="none" stroke="#43a6b8" stroke-width="1.500"/><path d="M34 10h13M34 14h13" stroke="#bbb"/><circle cx="42" cy="10" r="1.500" fill="#bbb"/><circle cx="38" cy="14" r="1.500" fill="#bbb"/></svg></div>
    <hr class="tsep ts1">
    <div class="pane"><svg viewBox="0 0 42 42"><rect x="0" y="0" width="42" height="42" fill="#c4c4c4"/><rect x="3.500" y="3.500" width="35" height="35" fill="none" stroke="#333"/><path d="M21 11l7 4-7 4-7-4zM12 17l7 4-7 4-7-4zM30 17l7 4-7 4-7-4zM21 23l7 4-7 4-7-4z" fill="#333"/></svg></div>
    <div class="pane"><svg viewBox="0 0 42 42"><path d="M.5.500h19.500v20H.5zM22 21.500h19.500v20H22zM.5 21.500h19.500v20H.5z" fill="none" stroke="#c4c4c4"/><rect x="22" y="0" width="20" height="20" fill="#c4c4c4"/><path d="M10.500 5v11M4 10.500h13M10.500 26v11M4 31.500h13M31.500 26v11M25 31.500h13" stroke="#c4c4c4"/><path d="M32 6.500l6 3.500-6 3.500-6-3.500z" fill="#333"/></svg></div>
    <div class="pane"><svg viewBox="0 0 42 42"><rect x=".5" y=".5" width="19.500" height="41" fill="none" stroke="#c4c4c4"/><rect x="22" y="0" width="20" height="42" fill="#c4c4c4"/><path d="M10.500 15v12M4 21h13" stroke="#c4c4c4"/><path d="M32 17.500l6 3.500-6 3.500-6-3.500z" fill="#333"/></svg></div>
    <div class="pane"><svg viewBox="0 0 42 42"><rect x=".5" y=".5" width="41" height="41" fill="none" stroke="#c4c4c4"/><rect x="8" y="5" width="6" height="6" fill="#c4c4c4"/><rect x="17" y="14" width="6" height="5" fill="#c4c4c4"/><rect x="17" y="23" width="6" height="5" fill="#c4c4c4"/><rect x="17" y="31" width="6" height="5" fill="#c4c4c4"/><path d="M14 8h12M23 16h13M23 25h9M23 33h8M11 11v22h6M11 16h6M11 25h6" stroke="#c4c4c4" fill="none"/></svg></div>
    <hr class="tsep ts2">
    <div class="search"><svg viewBox="0 0 54 33"><circle cx="24" cy="14" r="11.500" fill="none" stroke="#c4c4c4" stroke-width="2.500"/><path d="M33 22l11 9" stroke="#c4c4c4" stroke-width="3.500"/></svg></div>
    <svg class="logo" viewBox="0 0 46 50"><path d="M2 10 8 2h36v43H2z" fill="#36a6d6"/><path d="M2 10 8 2v37l-6 6z" fill="#6cc6e8"/><path d="M6 36h38v10a3 3 0 0 1-3 3H9a3 3 0 0 1-3-3z" fill="#2e6a88"/><text x="25" y="27" class="svgt mm">M</text><text x="25" y="46" class="svgt ma">AYA</text></svg>
  </aside>

  <section class="model-panel">
    <div class="menu panel-menu"><span>View</span><span>Shading</span><span>Lighting</span><span>Show</span><span>Renderer</span><span>Panels</span></div>
    <div class="pbar">
      <i class="grip grip-p0"></i>
      <span class="p"><svg viewBox="0 0 24 24"><path d="M4 1h19v19H4z" fill="#3aa6dc"/><path d="M1 4l3-3v19l-3 2z" fill="#2c7ea8"/><path d="M4 20h19l-2 3H1z" fill="#2e6a8a"/><text x="13.500" y="16" class="svgt pa">A</text></svg></span><span class="p"><svg><use href="#pb"/></svg></span><span class="p"><svg><use href="#pc"/></svg></span><span class="p"><svg><use href="#pd"/></svg></span><span class="p"><svg><use href="#pe"/></svg></span>
      <i class="grip grip-p"></i>
      <span class="p"><svg><use href="#pf"/></svg></span><span class="p"><svg><use href="#pg"/></svg></span><span class="p"><svg><use href="#ph"/></svg></span><span class="p"><svg><use href="#pi"/></svg></span><span class="p"><svg><use href="#pj"/></svg></span><span class="p"><svg><use href="#pk"/></svg></span><span class="p"><svg><use href="#pl"/></svg></span>
      <i class="grip grip-p"></i>
      <span class="p on"><svg><use href="#pm"/></svg></span><span class="p"><svg><use href="#pn"/></svg></span><span class="p"><svg><use href="#po"/></svg></span><span class="p dark"><svg><use href="#pp"/></svg></span><span class="p"><svg><use href="#pq"/></svg></span><span class="p"><svg><use href="#pr"/></svg></span><span class="p"><svg><use href="#ps"/></svg></span>
      <i class="grip grip-p"></i>
      <span class="p"><svg><use href="#pt"/></svg></span><span class="p on"><svg><use href="#pu"/></svg></span><span class="p"><svg><use href="#pv"/></svg></span><span class="p on"><svg><use href="#pw"/></svg></span><span class="p"><svg><use href="#px"/></svg></span><span class="p"><svg><use href="#py"/></svg></span><span class="p"><svg><use href="#pz"/></svg></span>
      <i class="grip grip-p"></i>
      <span class="p"><svg><use href="#qa"/></svg></span><span class="p"><svg><use href="#qb"/></svg></span><span class="p"><svg><use href="#qc"/></svg></span><span class="p dark"><svg><use href="#qd"/></svg></span>
      <i class="grip grip-p"></i>
      <span class="p"><svg><use href="#qe"/></svg></span>
    </div>
    <svg class="viewport" viewBox="74 185 986 1281">
      <rect x="74" y="185" width="986" height="1281" fill="#5d5d5d"/>
      <g id="pgrid" class="crisp"></g>
      <g class="cube">
        <path d="M931 253 972 227 1021 237 960 263Z" fill="#bebebe"/>
        <path d="M931 253 960 263V324L934 298Z" fill="#8e8e8e"/>
        <path d="M960 263 1021 237V306L960 324Z" fill="#a6a6a6"/>
        <text transform="matrix(.93 -.32 0 1 990 291)" class="svgt cube-t">RIGHT</text>
      </g>
      <g transform="translate(440 1040) scale(.33333)">
        <path d="M118 395 263 522V540L120 410Z" fill="#b0b0ea"/>
        <path d="M263 522 520 495V512L263 540Z" fill="#dcdcff"/>
        <path d="M520 495 683 362 685 380 520 512Z" fill="#c8c8f8"/>
        <path d="M93 240 265 133 475 113 625 215 683 362 520 495 263 522 118 395Z" fill="url(#baseFill)"/>
        <path d="M265 133 475 113 430 175 340 210Z" fill="url(#baseBack)"/>
        <path d="M340 210 430 175 480 240 405 240 355 235Z" fill="#bcbcec"/>
        <path d="M93 240 265 133 340 210 232 240Z" fill="#cacaf4"/>
        <path d="M475 113 625 215 480 240 430 175Z" fill="#c0c0f0"/>
        <g class="cy3">
          <path d="M93 240 265 133 475 113 625 215 683 362 520 495 263 522 118 395Z"/>
          <path d="M93 240 355 235M265 133 340 210M475 113 430 175M625 215 405 240M683 362 540 312 415 262M520 495 430 350 395 268M263 522 328 385 368 270M118 390 278 312 352 260M232 240 278 312 328 385 430 350 540 312 480 240 430 175 340 210 232 240"/>
        </g>
        <path d="M93 240 118 410 263 540 520 512 685 380 683 362" class="wh3"/>
      </g>
      <rect x="559" y="637" width="16" height="491" fill="#cbcbf8"/>
      <rect x="562" y="637" width="10" height="491" fill="#c0ecff"/>
      <path d="M561.500 637V1128" stroke="#5cd8ff" stroke-width="1"/>
      <path d="M567 637V1128" stroke="#8ee2ff" stroke-width="4"/>
      <path d="M572.500 637V1128" stroke="#fff" stroke-width="2"/>
      <path d="M559 1128h16" stroke="#66d9ff"/>
      <g transform="translate(440 340) scale(.33333)">
        <path d="M345 130 205 250H565L405 130Z" fill="url(#lampRoof)"/>
        <path d="M205 250 318 255 320 282 218 282Z" fill="#bcbcea"/>
        <path d="M318 255 470 255 468 282 320 282Z" fill="#c8c8f2"/>
        <path d="M470 255 565 250 552 282 468 282Z" fill="#a9a9dc"/>
        <path d="M218 282H552L525 305H240Z" fill="#000"/>
        <path d="M240 305H525L530 340 520 372H250L242 340Z" fill="url(#lampCollar)"/>
        <path d="M250 372 335 378 345 692 292 700Z" fill="#bcbcf0"/>
        <path d="M335 378H445L430 692H345Z" fill="#d8d8ff"/>
        <path d="M445 378 515 372 475 692 430 692Z" fill="#aeaee0"/>
        <path d="M288 685H478L470 705 295 707Z" fill="#9a9ab8"/>
        <path d="M295 706 470 704 398 765H362Z" fill="#000030"/>
        <path d="M345 716H425L398 765H365Z" fill="url(#lampCone)"/>
        <path d="M362 765H398L412 795H350Z" fill="#ccccff"/>
        <rect x="350" y="795" width="62" height="95" fill="#ccccff"/>
        <circle cx="375" cy="110" r="25" fill="#66d8ff"/>
        <path d="M355 105H397M355 117H397M365 90V128M375 90V128M385 90V128" stroke="#cdf2ff" stroke-width="2" stroke-dasharray="3 3"/>
        <g class="cy3 crisp">
          <path d="M330 162H435M285 187H485M208 255H560M285 283H530M250 307H500M245 340H520M250 365H520M310 378H510M295 690H475M320 708H420M330 720H430"/>
        </g>
        <g class="wh3 crisp">
          <path d="M375 85C350 88 345 100 348 125L205 250 208 275 240 305 245 345 255 375 292 700 330 725 362 765 350 795V888H412V795L400 765 430 725 475 695 515 375 525 345 525 305 560 278 565 250 405 130C408 100 398 88 375 85Z"/>
          <path d="M370 130 345 180 318 250 320 285 332 305 332 380 345 690 365 765M367 795V890M392 130 420 180 470 250 468 285 450 305 445 380 430 690 397 765M396 795V890"/>
        </g>
      </g>
      <g class="axis">
        <path d="M112 1408V1428" stroke="#aaa"/>
        <path d="M112 1428 94 1432" stroke="#0000ff" stroke-width="2" stroke-dasharray="4 1"/>
        <path d="M112 1428 122 1434" stroke="#e02020"/>
        <text x="112" y="1402" class="svgt ax-y">y</text>
        <text x="90" y="1429" class="svgt ax-z">z</text>
        <text x="123" y="1434" class="svgt ax-x">x</text>
      </g>
    </svg>
  </section>

  <section class="uv-col">
    <div class="tabs"><span class="tab active">UV Editor</span></div>
    <div class="uv-frame">
      <div class="menu uv-menu"><span>Edit</span><span>Create</span><span>Select</span><span>Cut/Sew</span><span>Modify</span><span>Tools</span><span>View</span><span>Image</span><span>Textures</span><span>UV Sets</span><span>Help</span></div>
      <div class="ubar">
        <div class="slots ug0"><span class="u"><svg><use href="#u1"/></svg></span><span class="u on"><svg><use href="#u2"/></svg></span><span class="u"><svg><use href="#u3"/></svg></span></div>
        <i class="usep"></i>
        <div class="slots"><span class="u on"><svg><use href="#u4"/></svg></span><span class="u"><svg><use href="#u5"/></svg></span></div>
        <i class="usep"></i>
        <div class="slots"><span class="u on"><svg><use href="#u6"/></svg></span><span class="u"><svg><use href="#u7"/></svg></span></div>
        <i class="usep"></i>
        <div class="slots"><span class="u"><svg><use href="#u8"/></svg></span></div>
        <div class="slots ug-tex"><span class="u on"><svg><use href="#u9"/></svg></span><span class="u"><svg><use href="#u10"/></svg></span></div>
        <i class="tri-d dim ml-c"></i>
        <div class="notex">No texture found</div>
        <div class="slots ug-rgb"><span class="u"><svg viewBox="0 0 30 30"><circle cx="15" cy="15" r="13.500" fill="none" stroke="#5fae88" stroke-width="2" stroke-dasharray="10 3"/><text x="15" y="20" class="svgt rgb">RGB</text></svg></span><span class="u"><svg><use href="#imgg"/></svg></span></div>
        <div class="slider"><i class="thumb"></i></div>
        <i class="chev chev-u1"></i><i class="chev chev-u2"></i>
      </div>
      <svg class="uvview" viewBox="1071 228 874 1238">
        <rect x="1071" y="228" width="874" height="1238" fill="#5d5d5d"/>
        <rect x="1071" y="228" width="874" height="1238" fill="url(#uvgrid)"/>
        <g class="uvlabels">
          <text x="1172" y="256">1.5</text><text x="1172" y="320">1.4</text><text x="1172" y="384">1.3</text><text x="1172" y="447">1.2</text><text x="1172" y="511">1.1</text><text x="1172" y="575">1</text><text x="1172" y="638">0.9</text><text x="1172" y="702">0.8</text><text x="1172" y="766">0.7</text><text x="1172" y="829">0.6</text><text x="1172" y="893">0.5</text><text x="1172" y="957">0.4</text><text x="1172" y="1020">0.3</text><text x="1172" y="1084">0.2</text><text x="1172" y="1148">0.1</text>
          <text x="1172" y="1275">-0.1</text><text x="1172" y="1339">-0.2</text><text x="1172" y="1402">-0.3</text><text x="1172" y="1462">-0.4</text>
          <text x="1108" y="1210">-0.1</text><text x="1172" y="1210">0</text><text x="1235" y="1210">0.1</text><text x="1299" y="1210">0.2</text><text x="1362" y="1210">0.3</text><text x="1426" y="1210">0.4</text><text x="1490" y="1210">0.5</text><text x="1553" y="1210">0.6</text><text x="1617" y="1210">0.7</text><text x="1681" y="1210">0.8</text><text x="1744" y="1210">0.9</text><text x="1808" y="1210">1</text><text x="1871" y="1210">1.1</text>
        </g>
        <g class="crisp">
          <path d="M1071 578.500H1945M1806.500 228V1466" stroke="#111"/>
          <path d="M1071 1215.500H1171M1807 1215.500H1945" stroke="#0000e0"/>
          <path d="M1171 1215.500H1807" stroke="#e00000" stroke-width="1.500"/>
          <path d="M1171.500 228V578M1171.500 1216V1466" stroke="#0000e0"/>
          <path d="M1171.500 578V1215" stroke="#22c022"/>
        </g>
        <g class="shell">
          <rect x="1194" y="592" width="51" height="596" class="uvf wh"/>
          <path d="M1199 592V1188M1205.700 592V1188M1212.700 592V1188M1219.300 592V1188M1226 592V1188M1232.300 592V1188M1239 592V1188" class="cyl"/>
          <circle cx="1196" cy="1197" r="8" class="uvf wh"/>
          <path d="M1196 1190V1204M1189 1197H1203M1191 1192 1201 1202M1201 1192 1191 1202" class="cyl"/>
        </g>
        <g transform="translate(1260 600) scale(.33333)">
          <g class="uvf wh3">
            <path d="M442 55 447 45 455 55 463 128 490 185 518 330 535 400 530 460 515 515 490 465 465 400 462 330 447 195 455 130Z"/>
            <path d="M800 133 780 170 750 205 738 248 640 385 610 445 540 490 515 515 535 470 550 405 580 385 690 245 748 200 770 165Z"/>
            <path d="M985 445 915 458 845 485 690 515 630 535 520 515 575 490 620 462 840 450 905 455 930 445Z"/>
            <path d="M885 790 845 760 830 748 775 730 640 635 585 610 520 520 575 540 630 545 650 575 790 695 830 745 887 785Z"/>
            <path d="M590 968 575 970 570 910 545 845 520 690 495 630 515 525 535 565 570 625 580 680 585 840 575 905Z"/>
            <path d="M232 898 240 875 280 830 300 770 415 600 425 570 510 520 490 570 490 610 460 640 330 795 283 830 250 875Z"/>
            <path d="M45 585 65 575 130 570 190 540 340 515 405 495 510 512 450 545 415 565 195 585 125 575 60 590Z"/>
            <path d="M133 232 150 235 195 275 255 298 390 390 440 410 460 425 510 510 440 490 395 460 240 335 195 280Z"/>
          </g>
          <path class="cy3" d="M452 185H487M452 192H487M470 345 515 342M468 380 528 376M468 410 530 405M478 460 525 455M590 375 638 400M575 392 625 430M555 405 610 445M700 240 730 258M710 232 738 250M620 462 630 532M632 462 638 530M652 462 658 525M668 464 672 522M680 464 684 520M690 464 692 515M840 450 843 485M850 452 852 484M630 560 585 610M650 585 615 625M658 592 625 630M665 600 632 635M790 695 770 725M800 705 780 735M500 630 568 618M510 652 572 648M515 680 568 675M550 840 582 835M553 865 578 863M425 585 480 625M410 615 462 640M395 640 440 665M305 770 335 790M300 785 325 800M345 515 350 575M355 515 360 572M378 510 385 570M398 498 415 565M180 545 187 582M190 542 195 585M385 395 360 435M408 405 380 445M430 415 405 475M445 425 420 470M240 305 230 325M255 305 240 330"/>
        </g>
        <g transform="translate(1300 960) scale(.33333)">
          <rect x="6" y="38" width="162" height="154" fill="url(#dense)" class="wh3d"/>
          <path class="uvf wh3" d="M405 140 580 97 760 145 775 160 835 345 770 540 755 555 580 600 400 550 385 535 325 350 387 155Z"/>
          <path class="cy3" d="M580 115 755 163 815 350 755 535 578 580 405 530 345 345 407 160ZM487 253H673V442H485ZM556 325H605V372H556ZM580 115V325M578 372V580M345 345H556M605 349H815M407 160 556 325M755 163 605 325M755 535 605 372M405 530 556 372"/>
          <path class="uvf wh3" d="M1190 100 1375 150 1435 345 1372 540 1190 588 1012 538 950 343 1013 150Z"/>
          <path class="cy3" d="M1192 100V588M950 344H1435"/>
        </g>
        <text x="1939" y="1458" class="uvstat">(0/7) UV shells, (0/31) overlapping UVs, (0/0) reversed UVs</text>
      </svg>
    </div>
  </section>

  <aside class="right-panel">
    <div class="tabs rtabs"><span class="tab active">UV Toolkit</span><span class="tab">Tool Settings</span><span class="tab">Attribute Editor</span></div>
    <div class="rbody">
      <div class="menu r-menu"><span>Options</span><span>Help</span></div>
      <div class="sec open">Selection</div>
      <div class="seltools">
        <svg class="st st1"><use href="#t1"/></svg><svg class="st st2"><use href="#t2"/></svg><svg class="st st3"><use href="#t3"/></svg><i class="st-sep"></i><svg class="st st4"><use href="#t4"/></svg><span class="st-on"><svg class="st st5"><use href="#t5"/></svg></span>
      </div>
      <div class="radios">
        <label class="radio sel"><i></i>Pick/Marquee</label>
        <label class="radio"><i></i>Drag</label>
        <label class="radio"><i></i>Tweak/Marquee</label>
      </div>
      <div class="opt first-opt"><span class="opt-l l1">Symmetry:</span><i class="tri-d dim"></i><span class="opt-f f1">Off</span><svg class="sym"><use href="#sym"/></svg></div>
      <div class="opt"><span class="opt-l l2">Selection Constraint:</span><i class="tri-d dim"></i><span class="opt-f f2">Off</span></div>
      <div class="opt"><span class="opt-l l2">Transform Constraint:</span><i class="tri-d dim"></i><span class="opt-f f2">Off</span></div>
      <div class="threebtn"><span>All</span><span>Clear</span><span>Inverse</span></div>
      <div class="arrows"><svg><use href="#a1"/></svg><svg><use href="#a2"/></svg><svg class="a-gap"><use href="#a3"/></svg><svg><use href="#a4"/></svg></div>
      <div class="sec sub shut m13">Pinning</div>
      <div class="sec sub shut m2">Select By Type</div>
      <div class="sec sub shut m2">Soft Selection</div>
      <div class="sec shut m10">Transform</div>
      <div class="sec shut m2">Create</div>
      <div class="sec open m2">Cut and Sew</div>
      <div class="brow m8"><span class="btn"><svg viewBox="0 0 30 30"><path d="M2 2h20v24H2zM12 2v24M2 14h20" fill="none" stroke="#ccc"/><path d="M4 26 12 12M19 24 12 12" stroke="#ddd" stroke-width="2"/><circle cx="22" cy="23" r="7" fill="#bbb"/><text x="22" y="27" class="svgt ba">A</text></svg>Auto-Seams</span></div>
      <div class="brow m7"><span class="btn"><svg><use href="#b2"/></svg>Cut</span><span class="btn"><svg><use href="#b3"/></svg>Cut Tool</span></div>
      <div class="brow m1"><span class="btn"><svg><use href="#b4"/></svg>Create UV Shell</span><span class="btn"><svg><use href="#b5"/></svg>Create Shell (Grid)</span></div>
      <div class="brow m7"><span class="btn"><svg><use href="#b6"/></svg>Sew</span><span class="btn"><svg><use href="#b7"/></svg>Sew Tool</span></div>
      <div class="brow m1"><span class="btn"><svg><use href="#b8"/></svg>Stitch Together</span><span class="tg blue w90">A to B</span><span class="tg w90 ml1">B to A</span></div>
      <div class="sec open m8">Unfold</div>
      <div class="brow m8"><span class="btn"><svg><use href="#b9"/></svg>Optimize</span><span class="btn"><svg><use href="#b10"/></svg>Optimize Tool</span></div>
      <div class="brow m1"><span class="btn"><svg><use href="#b11"/></svg>Unfold</span><span class="btn"><svg><use href="#b12"/></svg>Unfold Tool</span></div>
      <div class="brow m1"><span class="btn"><svg><use href="#b11"/></svg>Unfold Along</span><span class="tg blue w46">U</span><span class="tg w46 ml1">V</span></div>
      <div class="brow m7"><span class="btn"><svg><use href="#b13"/></svg>Straighten UVs</span><span class="numf">30.00</span><span class="tg blue w46 ml2">U</span><span class="tg blue w46 ml1">V</span></div>
      <div class="brow m1"><span class="btn"><svg><use href="#b14"/></svg>Straighten Shell</span></div>
      <div class="sec shut m8">Align and Snap</div>
      <div class="sec shut m2">Arrange and Layout</div>
      <i class="r-dots"></i>
      <div class="sec shut">UV Sets</div>
    </div>
  </aside>
</main>

<footer class="statusbar">
  <i class="vdots vd1"></i>
  <span class="help">?</span>
  <i class="st-line"></i>
  <i class="vdots vd2"></i>
  <span class="mel">MEL</span>
  <span class="cmd c1"></span>
  <span class="cmd c2"></span>
  <svg class="sb-ic" viewBox="0 0 24 24"><path d="M4 4h16v16H4z" fill="none" stroke="#bbb" stroke-width="1.500"/><path d="M4 8h16M8 2v4M16 2v4M9 11v6M13 11h3v6" stroke="#bbb"/></svg>
</footer>
<script src="script.js"></script>
</body>
</html>
```
FILE: styles.css
```css
* { box-sizing: border-box; }
html, body { margin: 0; padding: 0; }
body { width: 2400px; height: 1524px; overflow: hidden; background: #373737; display: flex; flex-direction: column; font: 14.600px/1 "Noto Sans", "Open Sans", sans-serif; color: #bbb; }
i { display: block; font-style: normal; flex: none; }
.defs { position: absolute; width: 0; height: 0; }
.svgt { font-family: "Noto Sans", sans-serif; text-anchor: middle; font-weight: 700; }
.ipr { font-size: 11px; fill: #333; }
.xg { font-size: 20px; fill: #3fa9bc; }
.pa { font-size: 14px; fill: #fff; }
.rgb { font-size: 12px; fill: #5fae88; stroke: #5fae88; stroke-width: .2; }
.ba { font-size: 10px; fill: #333; }
.mm { font-size: 26px; fill: #fff; font-weight: 700; }
.ma { font-size: 9px; fill: #fff; }
.cube-t { font-size: 14px; fill: #555; letter-spacing: 1px; }
.ax-y, .ax-z, .ax-x { font-family: "Liberation Sans", sans-serif; font-size: 16px; }
.ax-y { fill: #22dd22; }
.ax-z { fill: #0000ff; }
.ax-x { fill: #ee2020; }

.titlebar { height: 34px; flex: none; background: #f8f1ef; display: flex; align-items: center; color: #111; }
.title-logo { width: 22px; height: 23px; margin-left: 3px; }
.title-text { margin-left: 7px; font-size: 17.050px; white-space: nowrap; position: relative; top: 1px; }
.winctl { margin-left: auto; display: flex; align-items: center; padding-right: 29px; }
.wc { width: 15px; height: 16px; }
.wc-max { margin-left: 54px; }
.wc-close { margin-left: 56px; }

.menubar { height: 46px; flex: none; background: #444; display: flex; align-items: flex-start; }
.menu { display: flex; gap: 25px; color: #bbb; white-space: nowrap; }
.main-menu { padding: 15px 0 0 15px; gap: 25.800px; }
.workspace { margin-left: auto; display: flex; align-items: flex-start; padding: 6px 13px 0 0; }
.ws-label { margin-top: 9px; margin-right: 6px; }
.combo { background: #5d5d5d; display: flex; border-radius: 2px; color: #bbb; }
.combo-text { flex: 1; padding-left: 5px; line-height: 26px; }
.combo-arrow { width: 31px; border-left: 1px solid #4a4a4a; display: flex; align-items: center; justify-content: center; }
.ws-combo { width: 251px; height: 26px; }
.lock { width: 16px; height: 22px; margin: 2px 0 0 22px; }

.tri-d { width: 0; height: 0; border-left: 6px solid transparent; border-right: 6px solid transparent; border-top: 7px solid #d8d8d8; }
.tri-d.dim { border-top-color: #8f8f8f; }

.toolbar { height: 36px; flex: none; background: #444; display: flex; align-items: flex-start; }
.toolbar > * { flex: none; }
.tb-dots { margin: 3px 0 0 5px; }
.dots { width: 6px; height: 30px; background: radial-gradient(circle, #777 1px, transparent 1.500px) 0 0 / 3px 5px; }
.mode-combo { margin-left: 9px; width: 148px; height: 32px; }
.mode-combo .combo-text { line-height: 32px; }
.grip { width: 4px; height: 34px; background: linear-gradient(#5a5a5a, #5a5a5a) center / 1px 100% no-repeat, linear-gradient(#7d7d7d, #7d7d7d) center / 4px 20px no-repeat; }
.grip-a { margin-left: 14px; }
.grip-b { margin-left: 27px; }
.grip-c { margin-left: 14px; }
.grip-d { margin-left: 15px; }
.grip-e { margin-left: 12px; }
.grip-f { margin-left: 25px; }
.chev { width: 6px; height: 30px; margin-top: 2px; background: linear-gradient(#6e6e6e, #6e6e6e) left / 1px 100% no-repeat; position: relative; }
.chev::after { content: ""; position: absolute; left: 0; top: 7px; border-left: 6px solid #7a7a7a; border-top: 8px solid transparent; border-bottom: 8px solid transparent; }
.chev-a { margin-left: 10px; }
.chev-b { margin-left: 12px; }
.chev-c { margin-left: 11.500px; }
.slots { display: flex; flex: none; }
.s { width: 34.500px; height: 34px; display: flex; align-items: center; justify-content: center; margin-top: -1px; }
.s svg { width: 28px; height: 28px; }
.s35 { width: 35px; }
.on { background: #5285a6; border-radius: 2px; }
.g-file { margin-left: 14.500px; }
.g-sel { margin-left: 14.750px; }
.g-snap { margin-left: 14.250px; }
.g-io { margin-left: 13px; }
.g-render { margin-left: 13.500px; }
.ml-a { margin: 13px 0 0 7px; }
.ml-b { margin: 13px 0 0 20px; }
.ml-c { margin-left: 6.500px; }
.outfield { height: 34px; margin-top: -1px; border: 1px solid #4e4e4e; border-radius: 3px; background: #414141; line-height: 33px; padding-left: 9px; }
.live { margin-left: 10px; width: 149px; }
.symm { margin-left: 8px; width: 150px; }
.userbox { margin: -1px 0 0 14px; width: 180px; height: 33px; background: #5d5d5d; display: flex; align-items: center; color: #d0d0d0; border-radius: 1px; }
.user-ic { width: 22px; height: 30px; margin-left: 4px; }
.user-name { margin-left: 6px; width: 127px; overflow: hidden; white-space: nowrap; }
.userbox .tri-d { margin: -5px 0 0 4px; }
.xgen { width: 26px; height: 30px; margin-left: 5px; }
.g-work { margin-left: auto; padding-right: 6px; gap: 2.500px; }
.s-w { width: 33px; }

.workarea { flex: 1; min-height: 0; display: flex; background: #373737; }
.toolbox { width: 66px; margin-top: 4px; margin-bottom: 4px; background: #444; display: flex; flex-direction: column; padding: 0 6px 9px; }
.dots-h { height: 6px; width: 100%; margin-top: 2px; flex: none; background: radial-gradient(circle, #777 1px, transparent 1.500px) 0 0 / 5px 3px; }
.tool { height: 55px; flex: none; display: flex; border-radius: 2px; }
.tool svg { width: 54px; height: 55px; }
.tool.first { margin-top: 9px; }
.tool.skip { margin-top: 55px; }
.tsep { width: 100%; height: 2px; border: 0; background: #8a8a8a; margin: 0; flex: none; }
.ts1 { margin-top: 9px; }
.ts2 { margin-top: 15px; }
.pane { flex: none; height: 42px; margin-top: 13px; display: flex; justify-content: center; }
.pane svg { width: 42px; height: 42px; }
.search { margin-top: 18px; height: 33px; flex: none; }
.search svg { width: 54px; height: 33px; display: block; }
.logo { width: 46px; height: 50px; margin: auto 0 0 3px; flex: none; }

.model-panel { width: 994px; margin: 4px 0 4px 4px; background: #444; display: flex; flex-direction: column; }
.panel-menu { height: 35px; padding: 13px 0 0 19px; flex: none; gap: 26px; }
.pbar { height: 30px; flex: none; display: flex; padding-left: 0; }
.grip-p0 { margin: 0 6.500px 0 9px; height: 28px; }
.grip-p { margin: 0 6px 0 5px; height: 28px; }
.p { width: 29px; height: 28px; flex: none; display: flex; align-items: center; justify-content: center; }
.p svg { width: 24px; height: 24px; }
.p.dark { background: #353535; border: 1px solid #2b2b2b; }
.viewport { width: 986px; height: 1281px; margin-left: 4px; flex: none; display: block; }
.crisp { shape-rendering: crispEdges; }
.cy3 { fill: none; stroke: #5cdcff; stroke-width: 3; }
.wh3 { stroke: #fff; stroke-width: 6; }
g.wh3 path, path.wh3 { fill: none; }
.uvf { fill: #4f55ee; }
g.uvf path, path.uvf { fill: #4f55ee; fill-opacity: .97; }
.wh { stroke: #fff; stroke-width: 2; }
.wh3d { stroke: #fff; stroke-width: 6; stroke-dasharray: 6 2; }
.cyl { fill: none; stroke: #5cdcff; stroke-width: 1; }
.shell { shape-rendering: crispEdges; }
.uvlabels text { font: 700 14px "Liberation Sans", sans-serif; fill: #3c3c3c; }
.uvstat { font: 700 14.700px "Liberation Sans", sans-serif; fill: #f0f0f0; text-anchor: end; }

.uv-col { width: 875px; margin: 6px 0 0 6px; display: flex; flex-direction: column; }
.tabs { height: 25px; flex: none; display: flex; gap: 2px; }
.tab { height: 25px; padding: 5px 16px 0; background: #3c3c3c; border: 1px solid #333; border-bottom: 0; border-radius: 3px 3px 0 0; color: #9a9a9a; white-space: nowrap; }
.tab.active { background: #444; color: #d0d0d0; border-color: #444; }
.uv-frame { height: 1321px; border: 1px solid #7a7a7a; background: #444; display: flex; flex-direction: column; border-right-color: #777; }
.uv-menu { height: 32px; padding: 8px 0 0 15px; flex: none; gap: 26px; font-size: 14.500px; }
.ubar { height: 47px; flex: none; display: flex; align-items: flex-start; padding: 8px 0 0 8px; }
.u { width: 35px; height: 34px; display: flex; align-items: center; justify-content: center; }
.u.on { width: 34px; margin: 0 .5px; }
.u svg { width: 28px; height: 30px; }
.usep { width: 3px; height: 34px; background: #4e4e4e; margin: 0 4px; }
.ug-tex { margin-left: 76px; }
.ubar .ml-c { margin-top: 13px; }
.notex { width: 178px; height: 32px; margin: 1px 0 0 9px; background: #494949; color: #808080; line-height: 32px; padding-left: 9px; border-radius: 2px; }
.ug-rgb { margin-left: 1.500px; }
.slider { width: 84px; height: 8px; margin: 12px 0 0 1.500px; background: #2f2f2f; border-radius: 3px; position: relative; }
.thumb { position: absolute; left: 33px; top: -6px; width: 9px; height: 21px; background: #c8c8c8; border-radius: 2px; }
.chev-u1 { margin: 2px 0 0 11px; }
.chev-u2 { margin: 2px 0 0 9px; }
.uvview { width: 874px; height: 1238px; display: block; flex: none; }

.right-panel { width: 448px; margin: 6px 0 0 7px; display: flex; flex-direction: column; }
.rtabs { padding-left: 2px; gap: 1px; }
.rtabs .tab:nth-child(1) { width: 103px; }
.rtabs .tab:nth-child(2) { width: 123px; }
.rtabs .tab:nth-child(3) { width: 139px; }
.rbody { flex: 1; background: #444; display: flex; flex-direction: column; padding-bottom: 8px; }
.r-menu { height: 37px; padding: 8px 0 0 16px; flex: none; }
.sec { height: 28px; flex: none; margin-left: 6px; margin-right: 6px; background: #3c3c3c; border-radius: 3px; font-weight: 700; font-size: 15px; line-height: 29px; padding-left: 39px; position: relative; color: #b8bcc0; }
.sec::before { content: ""; position: absolute; }
.sec.open::before { left: 10px; top: 8px; border-left: 7px solid transparent; border-right: 7px solid transparent; border-top: 7px solid #e0e0e0; }
.sec.shut::before { left: 14px; top: 5px; border-top: 6.500px solid transparent; border-bottom: 6.500px solid transparent; border-left: 7px solid #e0e0e0; }
.sec.sub { margin-left: 14px; margin-right: 14px; }
.m1 { margin-top: 1px; }
.m2 { margin-top: 2px; }
.m7 { margin-top: 7px; }
.m8 { margin-top: 8px; }
.m10 { margin-top: 10px; }
.m13 { margin-top: 13px; }
.seltools { height: 54px; margin: 9px 0 0 45px; display: flex; flex: none; }
.st { height: 54px; display: block; }
.st1, .st4 { width: 38px; }
.st2, .st3 { width: 41px; }
.st2 { margin-left: 15px; }
.st3 { margin-left: 14px; }
.st-sep { width: 3px; height: 54px; background: #4e4e4e; margin: 0 32px 0 31px; }
.st-on { width: 54px; height: 54px; background: #5285a6; margin-left: 9px; display: block; }
.st5 { width: 54px; }
.radios { margin: 48px 0 0 16px; display: flex; flex-direction: column; flex: none; }
.radio { height: 26px; display: flex; align-items: center; gap: 11px; padding-bottom: 3px; }
.radio i { width: 16px; height: 16px; border-radius: 50%; background: #2c2c2c; box-shadow: 0 0 0 1px #3a3a3a; margin-top: 1px; }
.radio.sel i { background: #d0d0d0; }
.opt { height: 35px; margin: 4px 0 0 15px; display: flex; align-items: center; flex: none; }
.first-opt { margin-top: 9px; }
.opt-l { display: block; white-space: nowrap; font-size: 14.200px; }
.l2 { margin-top: 1px; }
.l1 { width: 107px; }
.l2 { width: 190px; }
.opt .tri-d { margin-top: -4px; }
.opt-f { height: 35px; background: #3c3c3c; border-radius: 3px; line-height: 35px; padding-left: 9px; margin-left: 17px; }
.f1 { width: 240px; }
.f2 { width: 198px; }
.sym { width: 28px; height: 26px; margin-left: 9px; }
.threebtn { display: flex; gap: 20px; margin: 10px 0 0 61px; flex: none; }
.threebtn span { width: 76px; height: 30px; background: #5d5d5d; text-align: center; line-height: 30px; color: #d0d0d0; border-radius: 1px; }
.arrows { display: flex; gap: 24px; margin: 13px 0 0 101px; flex: none; height: 22px; }
.arrows svg { width: 26px; height: 22px; }
.arrows .a-gap { margin-left: 16px; }
.brow { display: flex; height: 34px; margin-left: 13px; flex: none; }
.btn { width: 184px; height: 34px; background: #5d5d5d; border-radius: 1px; display: flex; align-items: center; white-space: nowrap; margin-right: 1px; color: #c8c8c8; }
.btn svg { width: 28px; height: 28px; margin: 0 5px 0 3px; flex: none; }
.tg { height: 34px; background: #5d5d5d; text-align: center; line-height: 34px; color: #c4c4c4; border-radius: 1px; }
.tg.blue { background: #5285a6; color: #d4d4d4; }
.w90 { width: 90px; }
.w46 { width: 46px; }
.ml1 { margin-left: 1px; }
.ml2 { margin-left: 2px; }
.numf { width: 89px; height: 32px; margin: 1px 0 0 1px; background: #2b2b2b; line-height: 32px; padding-left: 10px; border-radius: 2px; color: #c4c4c4; }
.r-dots { margin: auto 0 6px 148px; width: 147px; height: 3px; flex: none; background: radial-gradient(circle, #777 1px, transparent 1.500px) 0 0 / 4px 3px; }

.statusbar { height: 50px; flex: none; background: #444; display: flex; align-items: center; border-top: 1px solid #3a3a3a; }
.vdots { width: 6px; height: 50px; background: radial-gradient(circle, #777 1px, transparent 1.500px) 0 0 / 3px 5px; }
.vd1 { margin-left: 2px; }
.vd2 { margin-left: 4px; }
.help { width: 24px; height: 24px; margin-left: 15px; border-radius: 50%; background: #8a8a8a; color: #444; text-align: center; font-weight: 700; font-size: 17px; line-height: 24px; }
.st-line { width: 3px; height: 50px; margin-left: 1153px; background: #333; }
.mel { margin-left: 18px; width: 43px; color: #e8e8e8; }
.cmd { height: 30px; background: #2b2b2b; border-radius: 2px; }
.c1 { width: 529px; }
.c2 { width: 528px; margin-left: 11px; }
.sb-ic { width: 24px; height: 24px; margin-left: 18px; }
```
FILE: script.js
```js
// Draws the perspective ground grid from its four projected corners.
(function () {
  var svgNS = 'http://www.w3.org/2000/svg';
  var g = document.getElementById('pgrid');
  var c = [[309, 1082], [643, 987], [875, 1220], [441, 1420]];
  var dx1 = c[1][0] - c[2][0], dx2 = c[3][0] - c[2][0], sx = c[0][0] - c[1][0] + c[2][0] - c[3][0];
  var dy1 = c[1][1] - c[2][1], dy2 = c[3][1] - c[2][1], sy = c[0][1] - c[1][1] + c[2][1] - c[3][1];
  var den = dx1 * dy2 - dx2 * dy1;
  var h31 = (sx * dy2 - dx2 * sy) / den, h32 = (dx1 * sy - sx * dy1) / den;
  var a = c[1][0] - c[0][0] + h31 * c[1][0], b = c[3][0] - c[0][0] + h32 * c[3][0];
  var d = c[1][1] - c[0][1] + h31 * c[1][1], e = c[3][1] - c[0][1] + h32 * c[3][1];
  function pt(u, v) {
    var w = h31 * u + h32 * v + 1;
    return [(a * u + b * v + c[0][0]) / w, (d * u + e * v + c[0][1]) / w];
  }
  function line(p, q, major) {
    var l = document.createElementNS(svgNS, 'line');
    l.setAttribute('x1', p[0]); l.setAttribute('y1', p[1]);
    l.setAttribute('x2', q[0]); l.setAttribute('y2', q[1]);
    l.setAttribute('stroke', major ? '#3a3a3a' : '#484848');
    l.setAttribute('stroke-width', major ? 2 : 1);
    g.appendChild(l);
  }
  var n = 24;
  for (var i = 0; i <= n; i++) {
    var t = i / n, major = i === n / 2;
    line(pt(t, 0), pt(t, 1), major);
    line(pt(0, t), pt(1, t), major);
  }
})();
```
